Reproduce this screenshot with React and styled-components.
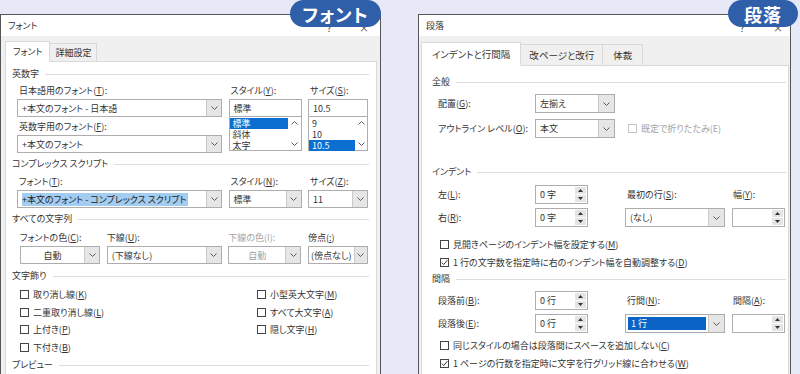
import React from 'react';
import styled, { createGlobalStyle } from 'styled-components';

const Global = createGlobalStyle`
  html, body { margin: 0; padding: 0; }
  body { background: #e7eaf6; font-family: "Noto Sans CJK JP", "Noto Sans", sans-serif; }
  u { text-underline-offset: 1px; }
`;

const Page = styled.div`
  width: 800px;
  height: 374px;
  overflow: hidden;
  background: #e7eaf6;
  display: flex;
  align-items: flex-start;
  gap: 37px;
  font-family: "Noto Sans CJK JP", "Noto Sans", sans-serif;
  font-feature-settings: "palt";
  font-size: 9px;
  color: #333;
`;

const Wrap = styled.div`
  position: relative;
  flex: none;
  width: ${p => p.$w}px;
  padding-top: 14px;
`;

const Badge = styled.div`
  position: absolute;
  top: 0;
  right: ${p => p.$right}px;
  width: ${p => p.$w}px;
  height: 27px;
  border-radius: 14px;
  background: #2f5fa9;
  color: #fff;
  font-weight: 700;
  font-size: 18px;
  letter-spacing: 1px;
  display: flex;
  align-items: center;
  justify-content: center;
  z-index: 2;
`;

const Dialog = styled.div`
  box-sizing: border-box;
  height: 360px;
  border: 1px solid #555;
  border-bottom: none;
  background: #f0f0f0;
  display: flex;
  flex-direction: column;
`;

const TitleBar = styled.div`
  height: 21px;
  flex: none;
  background: #fff;
  display: flex;
  align-items: center;
  justify-content: space-between;
  padding: 0 ${p => p.$pr}px 0 7px;
`;

const TitleButtons = styled.div`
  display: flex;
  gap: ${p => p.$gap}px;
`;

const TitleBtn = styled.span`
  width: 14px;
  text-align: center;
  font-size: 10px;
  line-height: 12px;
  margin-top: 5px;
  color: #444;
`;

const Body = styled.div`
  flex: 1;
  display: flex;
  flex-direction: column;
  padding: ${p => p.$pt}px ${p => p.$pr}px 0 ${p => p.$pl}px;
`;

const TabRow = styled.div`
  display: flex;
  align-items: flex-end;
  height: ${p => p.$h}px;
  flex: none;
`;

const Tab = styled.div`
  box-sizing: border-box;
  height: ${p => (p.$active ? p.$h : p.$h - 3)}px;
  padding: 0 ${p => p.$pad}px;
  display: flex;
  align-items: center;
  white-space: nowrap;
  border: 1px solid #d9d9d9;
  border-left-width: ${p => (p.$noLeft ? 0 : 1)}px;
  border-bottom: ${p => (p.$active ? '1px solid #fff' : 'none')};
  background: ${p => (p.$active ? '#fff' : '#f0f0f0')};
  margin-bottom: ${p => (p.$active ? -1 : 0)}px;
  position: relative;
  z-index: ${p => (p.$active ? 1 : 0)};
  font-size: ${p => p.$fs}px;
`;

const Panel = styled.div`
  flex: 1;
  background: #fff;
  border: 1px solid #d9d9d9;
  border-bottom: none;
  padding: ${p => p.$pt}px ${p => p.$pr}px 0 ${p => p.$pl}px;
  display: flex;
  flex-direction: column;
`;

const GroupHead = styled.div`
  display: flex;
  align-items: center;
  gap: 6px;
  height: 14px;
  line-height: 14px;
  flex: none;
  white-space: nowrap;
  margin-top: ${p => p.$mt || 0}px;
  &::after {
    content: '';
    flex: 1;
    border-top: 1px solid #dedede;
  }
`;

const Grid3 = styled.div`
  display: grid;
  grid-template-columns: 205px 73px 60px;
  column-gap: 6.5px;
  padding-left: 5px;
  align-items: start;
`;

const Col = styled.div`
  display: flex;
  flex-direction: column;
  min-width: 0;
`;

const Label = styled.div`
  height: 14px;
  line-height: 14px;
  padding-left: ${p => (p.$pl ?? 2)}px;
  margin-top: ${p => p.$mt || 0}px;
  margin-bottom: 1px;
  color: ${p => (p.$disabled ? '#a3a3a3' : '#333')};
  white-space: nowrap;
`;

const Field = styled.div`
  box-sizing: border-box;
  height: ${p => p.$h || 18}px;
  width: ${p => (p.$w ? `${p.$w}px` : '100%')};
  flex: none;
  border: 1px solid #adadad;
  background: #fff;
  display: flex;
  align-items: stretch;
`;

const FieldText = styled.div`
  flex: 1;
  min-width: 0;
  display: flex;
  align-items: center;
  justify-content: ${p => (p.$center ? 'center' : 'flex-start')};
  padding-left: ${p => (p.$center ? 0 : p.$pl ?? 4)}px;
  overflow: hidden;
  white-space: nowrap;
  color: ${p => (p.$disabled ? '#a3a3a3' : '#333')};
`;

const Highlight = styled.span`
  background: #a3cdf0;
  color: #222;
  line-height: 13px;
  padding-right: 1px;
`;

const SelText = styled.div`
  flex: 1;
  align-self: stretch;
  margin: 2px 2px 2px -2px;
  padding-left: 3px;
  background: #0a64c6;
  color: #fff;
  display: flex;
  align-items: center;
`;

const DropBtn = styled.div`
  width: ${p => p.$w || 14}px;
  flex: none;
  background: #e6e6e6;
  border-left: 1px solid #cacaca;
  display: flex;
  align-items: center;
  justify-content: center;
`;

const SpinBtns = styled.div`
  width: 11px;
  flex: none;
  margin: 1px 1px 1px 0;
  display: flex;
  flex-direction: column;
  gap: 1px;
`;

const SpinHalf = styled.div`
  flex: 1;
  background: #e4e4e4;
  display: flex;
  align-items: center;
  justify-content: center;
`;

const ListBox = styled.div`
  box-sizing: border-box;
  height: 35px;
  margin-top: -1px;
  border: 1px solid #adadad;
  background: #fff;
  display: flex;
`;

const ListItems = styled.div`
  flex: 1;
  display: flex;
  flex-direction: column;
  padding-top: 1px;
`;

const ListItem = styled.div`
  height: 11px;
  line-height: 11px;
  padding-left: 3px;
  white-space: nowrap;
  background: ${p => (p.$sel ? '#0a6fd0' : 'transparent')};
  color: ${p => (p.$sel ? '#fff' : '#333')};
`;

const ScrollCol = styled.div`
  width: ${p => p.$w}px;
  flex: none;
  display: flex;
  flex-direction: column;
  justify-content: space-between;
  align-items: center;
  padding: 4px 0;
`;

const ColorGrid = styled.div`
  display: grid;
  grid-template-columns: 80px 115px 73px 60px;
  column-gap: 6.67px;
  padding-left: 8px;
`;

const DecoGrid = styled.div`
  display: grid;
  grid-template-columns: 237px auto;
  grid-auto-rows: 17.5px;
  padding-left: 8px;
  margin-top: 3px;
`;

const CheckItem = styled.div`
  display: flex;
  align-items: center;
  gap: 4px;
  white-space: nowrap;
  height: ${p => p.$h || 17.5}px;
  color: ${p => (p.$disabled ? '#a3a3a3' : '#333')};
  margin-left: ${p => p.$ml || 0}px;
`;

const Box = styled.span`
  box-sizing: border-box;
  width: 9px;
  height: 9px;
  flex: none;
  border: 1px solid ${p => (p.$disabled ? '#c4c4c4' : '#444')};
  background: #fff;
  display: flex;
  align-items: center;
  justify-content: center;
`;

const FormRow = styled.div`
  display: flex;
  align-items: center;
  height: 19px;
  padding-left: 6px;
  margin-top: ${p => p.$mt || 0}px;
`;

const RowLabel = styled.div`
  width: ${p => p.$w}px;
  flex: none;
  white-space: nowrap;
`;

const SpinGrid = styled.div`
  display: grid;
  grid-template-columns: 97px 53px 37px 100px 7px 53px;
  grid-template-rows: 19px 19px;
  row-gap: ${p => p.$gap}px;
  grid-template-areas:
    "l1 s1 . fl . wl"
    "l2 s2 . fc . ws";
  padding-left: 6px;
  margin-top: ${p => p.$mt}px;
`;

const Cell = styled.div`
  grid-area: ${p => p.$area};
  display: flex;
  align-items: center;
  white-space: nowrap;
  padding-left: ${p => p.$pl || 0}px;
  min-width: 0;
`;

const CheckList = styled.div`
  display: flex;
  flex-direction: column;
  padding-left: 8px;
  margin-top: ${p => p.$mt}px;
`;

const ChevronDown = () => (
  <svg width="7" height="4" viewBox="0 0 7 4">
    <polyline points="0.5,0.5 3.5,3.5 6.5,0.5" fill="none" stroke="#5a5a5a" strokeWidth="1" />
  </svg>
);

const ChevronUp = () => (
  <svg width="7" height="4" viewBox="0 0 7 4">
    <polyline points="0.5,3.5 3.5,0.5 6.5,3.5" fill="none" stroke="#5a5a5a" strokeWidth="1" />
  </svg>
);

const TriUp = () => (
  <svg width="5" height="3" viewBox="0 0 5 3">
    <polygon points="0,3 2.5,0 5,3" fill="#333" />
  </svg>
);

const TriDown = () => (
  <svg width="5" height="3" viewBox="0 0 5 3">
    <polygon points="0,0 2.5,3 5,0" fill="#333" />
  </svg>
);

const Combo = ({ children, w, h, disabled, center, selected, tight }) => (
  <Field $w={w} $h={h}>
    <FieldText $disabled={disabled} $center={center} $pl={tight ? 2 : 4}>
      {selected ? <SelText>{children}</SelText> : children}
    </FieldText>
    <DropBtn $w={tight ? 12 : w && w > 70 ? 15 : 14}>
      <ChevronDown />
    </DropBtn>
  </Field>
);

const Spin = ({ children }) => (
  <Field $w={53} $h={19}>
    <FieldText>{children}</FieldText>
    <SpinBtns>
      <SpinHalf><TriUp /></SpinHalf>
      <SpinHalf><TriDown /></SpinHalf>
    </SpinBtns>
  </Field>
);

const Check = ({ children, checked, disabled, h, ml }) => (
  <CheckItem $disabled={disabled} $h={h} $ml={ml}>
    <Box $disabled={disabled}>
      {checked && (
        <svg width="7" height="7" viewBox="0 0 7 7">
          <polyline points="0.8,3.6 2.7,5.5 6.3,1.2" fill="none" stroke="#333" strokeWidth="1" />
        </svg>
      )}
    </Box>
    <span>{children}</span>
  </CheckItem>
);

const FontDialog = () => (
  <Wrap $w={381}>
    <Badge $w={91} $right={0}>フォント</Badge>
    <Dialog>
      <TitleBar $pr={9}>
        <span>フォント</span>
        <TitleButtons $gap={21}>
          <TitleBtn>?</TitleBtn>
          <TitleBtn>×</TitleBtn>
        </TitleButtons>
      </TitleBar>
      <Body $pt={4} $pr={3} $pl={4}>
        <TabRow $h={21}>
          <Tab $active $h={21} $pad={7} $fs={9}>フォント</Tab>
          <Tab $h={21} $pad={5} $fs={9} $noLeft>詳細設定</Tab>
        </TabRow>
        <Panel $pt={5} $pr={7} $pl={6}>
          <GroupHead>英数字</GroupHead>
          <Grid3>
            <Col>
              <Label $mt={3}>日本語用のフォント(<u>T</u>):</Label>
              <Combo>+本文のフォント - 日本語</Combo>
              <Label $mt={3}>英数字用のフォント(<u>F</u>):</Label>
              <Combo>+本文のフォント</Combo>
            </Col>
            <Col>
              <Label $mt={3}>スタイル(<u>Y</u>):</Label>
              <Field><FieldText>標準</FieldText></Field>
              <ListBox>
                <ListItems>
                  <ListItem $sel>標準</ListItem>
                  <ListItem>斜体</ListItem>
                  <ListItem>太字</ListItem>
                </ListItems>
                <ScrollCol $w={13}><ChevronUp /><ChevronDown /></ScrollCol>
              </ListBox>
            </Col>
            <Col>
              <Label $mt={3}>サイズ(<u>S</u>):</Label>
              <Field><FieldText>10.5</FieldText></Field>
              <ListBox>
                <ListItems>
                  <ListItem>9</ListItem>
                  <ListItem>10</ListItem>
                  <ListItem $sel>10.5</ListItem>
                </ListItems>
                <ScrollCol $w={12}><ChevronUp /><ChevronDown /></ScrollCol>
              </ListBox>
            </Col>
          </Grid3>

          <GroupHead $mt={4}>コンプレックス スクリプト</GroupHead>
          <Grid3>
            <Col>
              <Label $mt={4}>フォント(<u>T</u>):</Label>
              <Combo><Highlight>+本文のフォント - コンプレックス スクリプト</Highlight></Combo>
            </Col>
            <Col>
              <Label $mt={4}>スタイル(<u>N</u>):</Label>
              <Combo>標準</Combo>
            </Col>
            <Col>
              <Label $mt={4}>サイズ(<u>Z</u>):</Label>
              <Combo>11</Combo>
            </Col>
          </Grid3>

          <GroupHead $mt={4}>すべての文字列</GroupHead>
          <ColorGrid>
            <Col>
              <Label $mt={5} $pl={0}>フォントの色(<u>C</u>):</Label>
              <Combo center>自動</Combo>
            </Col>
            <Col>
              <Label $mt={5} $pl={0}>下線(<u>U</u>):</Label>
              <Combo>(下線なし)</Combo>
            </Col>
            <Col>
              <Label $mt={5} $pl={0} $disabled>下線の色(I):</Label>
              <Combo center disabled>自動</Combo>
            </Col>
            <Col>
              <Label $mt={5} $pl={0}>傍点(<u>:</u>)</Label>
              <Combo tight>(傍点なし)</Combo>
            </Col>
          </ColorGrid>

          <GroupHead $mt={5}>文字飾り</GroupHead>
          <DecoGrid>
            <Check>取り消し線(<u>K</u>)</Check>
            <Check>小型英大文字(<u>M</u>)</Check>
            <Check>二重取り消し線(<u>L</u>)</Check>
            <Check>すべて大文字(<u>A</u>)</Check>
            <Check>上付き(<u>P</u>)</Check>
            <Check>隠し文字(<u>H</u>)</Check>
            <Check>下付き(<u>B</u>)</Check>
          </DecoGrid>

          <GroupHead $mt={2}>プレビュー</GroupHead>
        </Panel>
      </Body>
    </Dialog>
  </Wrap>
);

const ParagraphDialog = () => (
  <Wrap $w={373}>
    <Badge $w={70} $right={-7}>段落</Badge>
    <Dialog>
      <TitleBar $pr={5}>
        <span>段落</span>
        <TitleButtons $gap={22}>
          <TitleBtn>?</TitleBtn>
          <TitleBtn>×</TitleBtn>
        </TitleButtons>
      </TitleBar>
      <Body $pt={5} $pr={1} $pl={2}>
        <TabRow $h={24}>
          <Tab $active $h={24} $pad={10} $fs={9.5}>インデントと行間隔</Tab>
          <Tab $h={24} $pad={8} $fs={9.5} $noLeft>改ページと改行</Tab>
          <Tab $h={24} $pad={10} $fs={9.5} $noLeft>体裁</Tab>
        </TabRow>
        <Panel $pt={9} $pr={2} $pl={10}>
          <GroupHead>全般</GroupHead>
          <FormRow $mt={5}>
            <RowLabel $w={97}>配置(<u>G</u>):</RowLabel>
            <Combo w={80} h={19}>左揃え</Combo>
          </FormRow>
          <FormRow $mt={6}>
            <RowLabel $w={97}>アウトライン レベル(<u>O</u>):</RowLabel>
            <Combo w={80} h={19}>本文</Combo>
            <Check disabled ml={13} h={19}>既定で折りたたみ(E)</Check>
          </FormRow>

          <GroupHead $mt={27}>インデント</GroupHead>
          <SpinGrid $mt={6} $gap={4}>
            <Cell $area="l1">左(<u>L</u>):</Cell>
            <Cell $area="s1"><Spin>0 字</Spin></Cell>
            <Cell $area="fl" $pl={2}>最初の行(<u>S</u>):</Cell>
            <Cell $area="wl" $pl={1}>幅(<u>Y</u>):</Cell>
            <Cell $area="l2">右(<u>R</u>):</Cell>
            <Cell $area="s2"><Spin>0 字</Spin></Cell>
            <Cell $area="fc"><Combo w={100} h={19}>(なし)</Combo></Cell>
            <Cell $area="ws"><Spin /></Cell>
          </SpinGrid>
          <CheckList $mt={8}>
            <Check h={18}>見開きページのインデント幅を設定する(<u>M</u>)</Check>
            <Check h={18} checked>1 行の文字数を指定時に右のインデント幅を自動調整する(<u>D</u>)</Check>
          </CheckList>

          <GroupHead $mt={1}>間隔</GroupHead>
          <SpinGrid $mt={5} $gap={4}>
            <Cell $area="l1">段落前(<u>B</u>):</Cell>
            <Cell $area="s1"><Spin>0 行</Spin></Cell>
            <Cell $area="fl" $pl={2}>行間(<u>N</u>):</Cell>
            <Cell $area="wl" $pl={1}>間隔(<u>A</u>):</Cell>
            <Cell $area="l2">段落後(<u>E</u>):</Cell>
            <Cell $area="s2"><Spin>0 行</Spin></Cell>
            <Cell $area="fc"><Combo w={100} h={19} selected>1 行</Combo></Cell>
            <Cell $area="ws"><Spin /></Cell>
          </SpinGrid>
          <CheckList $mt={3}>
            <Check h={18}>同じスタイルの場合は段落間にスペースを追加しない(<u>C</u>)</Check>
            <Check h={18} checked>1 ページの行数を指定時に文字を行グリッド線に合わせる(<u>W</u>)</Check>
          </CheckList>
        </Panel>
      </Body>
    </Dialog>
  </Wrap>
);

export default function App() {
  return (
    <>
      <Global />
      <Page>
        <FontDialog />
        <ParagraphDialog />
      </Page>
    </>
  );
}
